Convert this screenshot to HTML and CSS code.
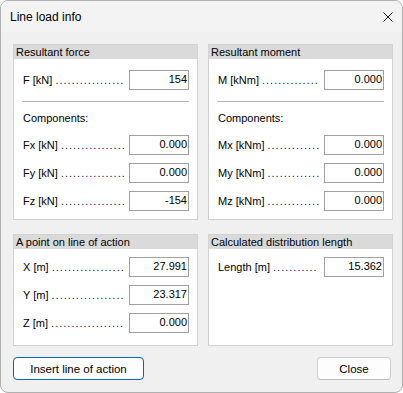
FILE: index.html
```html
<!DOCTYPE html>
<html>
<head>
  <meta charset="UTF-8">
  <title>Line load info</title>
  <link rel="stylesheet" href="styles.css">
</head>
<body>
  <div class="window">
    <div class="titlebar">
      <span class="title">Line load info</span>
      <svg class="close-x" width="10" height="10" viewBox="0 0 10 10">
        <path d="M0.5 0.5 L9.5 9.5 M9.5 0.5 L0.5 9.5" stroke="#1a1a1a" stroke-width="1" fill="none"/>
      </svg>
    </div>
    <div class="main">
      <div class="groups">
        <div class="group">
          <div class="group-head">Resultant force</div>
          <div class="group-body top">
            <div class="row"><span class="label">F [kN] <span class="dots">.................</span></span><div class="field">154</div></div>
            <div class="sep"></div>
            <div class="sub">Components:</div>
            <div class="rows">
              <div class="row"><span class="label">Fx [kN] <span class="dots">................</span></span><div class="field">0.000</div></div>
              <div class="row"><span class="label">Fy [kN] <span class="dots">................</span></span><div class="field">0.000</div></div>
              <div class="row"><span class="label">Fz [kN] <span class="dots">................</span></span><div class="field">-154</div></div>
            </div>
          </div>
        </div>
        <div class="group">
          <div class="group-head">Resultant moment</div>
          <div class="group-body top">
            <div class="row"><span class="label">M [kNm] <span class="dots">..............</span></span><div class="field">0.000</div></div>
            <div class="sep"></div>
            <div class="sub">Components:</div>
            <div class="rows">
              <div class="row"><span class="label">Mx [kNm] <span class="dots">.............</span></span><div class="field">0.000</div></div>
              <div class="row"><span class="label">My [kNm] <span class="dots">.............</span></span><div class="field">0.000</div></div>
              <div class="row"><span class="label">Mz [kNm] <span class="dots">.............</span></span><div class="field">0.000</div></div>
            </div>
          </div>
        </div>
        <div class="group">
          <div class="group-head">A point on line of action</div>
          <div class="group-body bottom">
            <div class="rows">
              <div class="row"><span class="label">X [m] <span class="dots">..................</span></span><div class="field">27.991</div></div>
              <div class="row"><span class="label">Y [m] <span class="dots">..................</span></span><div class="field">23.317</div></div>
              <div class="row"><span class="label">Z [m] <span class="dots">..................</span></span><div class="field">0.000</div></div>
            </div>
          </div>
        </div>
        <div class="group">
          <div class="group-head">Calculated distribution length</div>
          <div class="group-body bottom">
            <div class="row"><span class="label">Length [m] <span class="dots">...........</span></span><div class="field">15.362</div></div>
          </div>
        </div>
      </div>
      <div class="buttons">
        <button class="btn btn-default">Insert line of action</button>
        <button class="btn btn-close">Close</button>
      </div>
    </div>
  </div>
</body>
</html>
```

FILE: styles.css
```css
* {
  margin: 0;
  padding: 0;
  box-sizing: border-box;
}
body {
  background-color: #fff;
  font-family: "Liberation Sans", Arial, sans-serif;
  font-size: 11px;
  color: #000;
}
div.window {
  width: 403px;
  height: 393px;
  border: 1px solid #b0b0b0;
  border-radius: 8px;
  background-color: #f0f0f0;
  overflow: hidden;
}
div.titlebar {
  height: 31px;
  padding: 0 9px 0 9px;
  background-color: #f3f3f3;
  display: flex;
  align-items: center;
  justify-content: space-between;
}
span.title {
  font-size: 12px;
  color: #000;
}
svg.close-x {
  display: block;
}
div.main {
  padding: 12px 9px 12px 12px;
}
div.groups {
  display: grid;
  grid-template-columns: 185px 185px;
  column-gap: 10px;
  row-gap: 14px;
}
div.group {
  border: 1px solid #d2d2d2;
  background-color: #fff;
}
div.group-head {
  height: 14px;
  line-height: 14px;
  padding-left: 2px;
  background-color: #dadada;
  white-space: nowrap;
}
div.group-body {
  padding: 0 8px 0 9px;
}
div.group-body.top {
  padding-top: 11px;
  padding-bottom: 8px;
}
div.group-body.bottom {
  padding-top: 8px;
  padding-bottom: 12px;
}
div.rows {
  display: flex;
  flex-direction: column;
  gap: 8px;
}
div.row {
  height: 20px;
  display: flex;
  align-items: center;
}
span.label {
  flex: 1;
  white-space: nowrap;
  overflow: hidden;
}
span.dots {
  letter-spacing: 1px;
  color: #1c1650;
}
div.field {
  width: 60px;
  height: 20px;
  border: 1px solid #a0a0a0;
  background-color: #fff;
  text-align: right;
  padding-right: 1px;
  line-height: 16px;
}
div.sep {
  height: 1px;
  margin: 11px 0 0 -1px;
  background-color: #b4b4b4;
}
div.sub {
  height: 14px;
  line-height: 14px;
  margin: 9px 0 10px 0;
}
div.buttons {
  margin-top: 11px;
  padding-right: 2px;
  display: flex;
  justify-content: space-between;
}
button.btn {
  height: 23px;
  border: 1px solid #d0d0d0;
  border-bottom-color: #bcbcbc;
  border-radius: 4px;
  background-color: #fdfdfd;
  font-family: "Liberation Sans", Arial, sans-serif;
  font-size: 11.5px;
  color: #000;
}
button.btn-default {
  width: 131px;
  border: 1px solid #0067c0;
}
button.btn-close {
  width: 74px;
}
```
